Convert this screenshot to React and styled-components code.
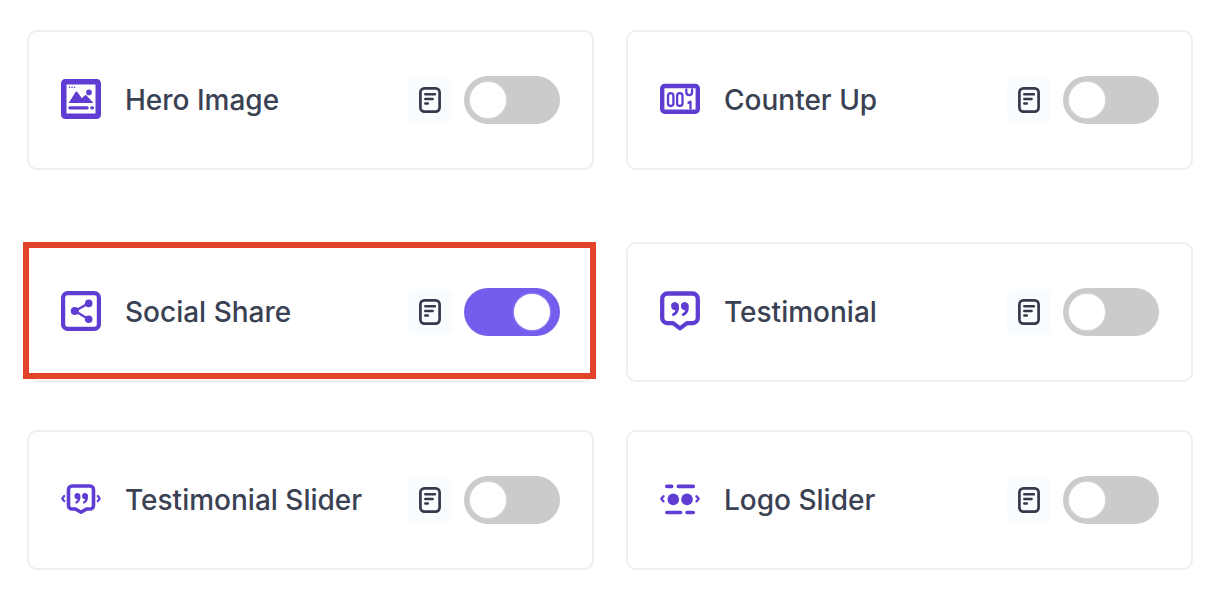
import React, { useState } from "react";
import styled, { createGlobalStyle } from "styled-components";

const GlobalStyle = createGlobalStyle`
  * { box-sizing: border-box; }
  body {
    margin: 0;
    background: #ffffff;
    color: #3a4153;
    font-family: Inter, "Liberation Sans", sans-serif;
  }
`;

const Page = styled.main`
  display: flex;
  flex-direction: column;
  gap: 72px;
  padding: 30px 21px 28px 27px;
`;

const Group = styled.section`
  display: grid;
  grid-template-columns: repeat(2, minmax(0, 1fr));
  gap: 48px 32px;
`;

const Card = styled.article`
  position: relative;
  display: flex;
  align-items: center;
  min-height: 140px;
  padding: 32px;
  border: 2px solid #efeff0;
  border-radius: 10px;
`;

const Highlight = styled.div`
  position: absolute;
  top: -2px;
  right: -4px;
  bottom: 1px;
  left: -6px;
  border: 6px solid #e2432a;
  pointer-events: none;
`;

const WidgetIcon = styled.svg`
  flex: none;
  width: 40px;
  height: 42px;
  color: #5f3dd3;
  fill: none;
  stroke: currentColor;
  stroke-linecap: round;
  stroke-linejoin: round;
`;

const Name = styled.label`
  flex: 1;
  margin-left: 24px;
  font-size: 28px;
  font-weight: 500;
  line-height: 40px;
`;

const DocsButton = styled.button`
  display: grid;
  place-items: center;
  flex: none;
  width: 44px;
  height: 44px;
  margin-right: 12px;
  padding: 0;
  border: 0;
  border-radius: 6px;
  background: #f9fcfe;
  color: #343a4b;
  cursor: pointer;
`;

const Switch = styled.input`
  appearance: none;
  flex: none;
  width: 96px;
  height: 48px;
  margin: 0;
  padding: 6px;
  border-radius: 24px;
  background: #cbcbcb;
  cursor: pointer;

  &::before {
    content: "";
    display: block;
    width: 36px;
    height: 36px;
    border-radius: 50%;
    background: #ffffff;
    box-shadow: 0 0 2px rgba(255, 255, 255, 0.8);
  }
  &:checked {
    background: #755cec;
  }
  &:checked::before {
    margin-left: 44px;
  }
`;

const DocsIcon = () => (
  <svg width="22" height="26" viewBox="0 0 22 26" fill="none" stroke="currentColor" strokeLinecap="round" aria-hidden="true">
    <rect x="1.4" y="1.4" width="19.2" height="23.2" rx="4" strokeWidth="2.7" />
    <path d="M6.3 7.3h9.6M6.3 11.9h7.3M6.3 16.4h2.5" strokeWidth="2.5" />
  </svg>
);

const quote = "M3.9 0a3.6 3.6 0 1 0 .5 7.2C4 8.4 3.2 9.2 2.1 9.9c-1.5 1-.5 3 1.2 2.2C6.4 10.7 7.6 7.9 7.5 4.2A3.7 3.7 0 0 0 3.9 0Z";

const drawings = {
  hero: (
    <>
      <rect x="2.75" y="2.75" width="34.5" height="34.5" rx="1.5" strokeWidth="5.5" />
      <g fill="currentColor" stroke="none">
        <circle cx="8.5" cy="8.3" r=".8" />
        <circle cx="11" cy="8.3" r=".8" />
        <circle cx="13.5" cy="8.3" r=".8" />
        <circle cx="28" cy="13.4" r="2.8" />
        <path d="M7.7 24 14.6 13.1q.9-1.2 1.8 0l4.4 6.1 2.9-2.7q.9-.8 1.8 0L32.5 24Z" />
      </g>
      <path d="M8.9 28.8h17.2M30.8 28.8h.7" strokeWidth="3.3" />
    </>
  ),
  counter: (
    <>
      <rect x="2.2" y="7" width="35.6" height="25.8" rx="2.5" strokeWidth="4.4" />
      <g strokeWidth="2.3">
        <rect x="8" y="14.2" width="5.4" height="12.8" rx="2.7" />
        <rect x="17.1" y="14.2" width="5.4" height="12.8" rx="2.7" />
        <path d="M26.3 10.5v2.7a2.9 2.9 0 0 0 5.8 0v-2.7M28.5 23.8l2-1.2V29.5" />
      </g>
    </>
  ),
  share: (
    <>
      <rect x="2.1" y="2.1" width="35.8" height="35.8" rx="4.5" strokeWidth="4.2" />
      <path d="m14 20 13.7-7.7M14 20l13.7 8.3" strokeWidth="2.4" />
      <g fill="currentColor" stroke="none">
        <circle cx="13.8" cy="20" r="4" />
        <circle cx="27.7" cy="12.4" r="3.8" />
        <circle cx="27.7" cy="28.3" r="3.8" />
      </g>
    </>
  ),
  testimonial: (
    <>
      <path d="M7.5 2.5h25a5.3 5.3 0 0 1 5.3 5.3v19a5.3 5.3 0 0 1-5.3 5.3H27L20 37.4l-7-5.3H7.5a5.3 5.3 0 0 1-5.3-5.3v-19a5.3 5.3 0 0 1 5.3-5.3Z" strokeWidth="4.3" />
      <g fill="currentColor" stroke="none">
        <path transform="translate(10.5 11) scale(1.13)" d={quote} />
        <path transform="translate(20.3 11) scale(1.13)" d={quote} />
      </g>
    </>
  ),
  testimonialSlider: (
    <>
      <path d="M11 7h18a3.5 3.5 0 0 1 3.5 3.5v16A3.5 3.5 0 0 1 29 30h-3.5L20 33.3 14.5 30H11a3.5 3.5 0 0 1-3.5-3.5v-16A3.5 3.5 0 0 1 11 7Z" strokeWidth="3.6" />
      <g fill="currentColor" stroke="none">
        <path transform="translate(13 14) scale(.86)" d={quote} />
        <path transform="translate(20.6 14) scale(.86)" d={quote} />
      </g>
      <path d="m3.2 17-2 2.6 2 2.6M36.8 17l2 2.6-2 2.6" strokeWidth="2.2" />
    </>
  ),
  logoSlider: (
    <>
      <path d="M6.8 7.4h4.9M18.3 7.4h15M6.8 33.5h13.8M27 33.5h6.3" strokeWidth="3.6" />
      <g fill="currentColor" stroke="none">
        <circle cx="13.3" cy="20.4" r="5.8" />
        <circle cx="27" cy="20.4" r="5.8" />
      </g>
      <path d="m3.5 17.2-2.2 2.6 2.2 2.6M36.5 17.2l2.2 2.6-2.2 2.6" strokeWidth="2.3" />
    </>
  ),
};

function WidgetCard({ id, name, enabled = false, highlighted = false }) {
  const [on, setOn] = useState(enabled);
  return (
    <Card>
      <WidgetIcon viewBox="0 0 40 42" aria-hidden="true">{drawings[id]}</WidgetIcon>
      <Name htmlFor={id}>{name}</Name>
      <DocsButton type="button" aria-label={`${name} documentation`}>
        <DocsIcon />
      </DocsButton>
      <Switch id={id} type="checkbox" role="switch" checked={on} onChange={(e) => setOn(e.target.checked)} />
      {highlighted && <Highlight />}
    </Card>
  );
}

export default function App() {
  return (
    <>
      <GlobalStyle />
      <Page>
        <Group>
          <WidgetCard id="hero" name="Hero Image" />
          <WidgetCard id="counter" name="Counter Up" />
        </Group>
        <Group>
          <WidgetCard id="share" name="Social Share" enabled highlighted />
          <WidgetCard id="testimonial" name="Testimonial" />
          <WidgetCard id="testimonialSlider" name="Testimonial Slider" />
          <WidgetCard id="logoSlider" name="Logo Slider" />
        </Group>
      </Page>
    </>
  );
}
